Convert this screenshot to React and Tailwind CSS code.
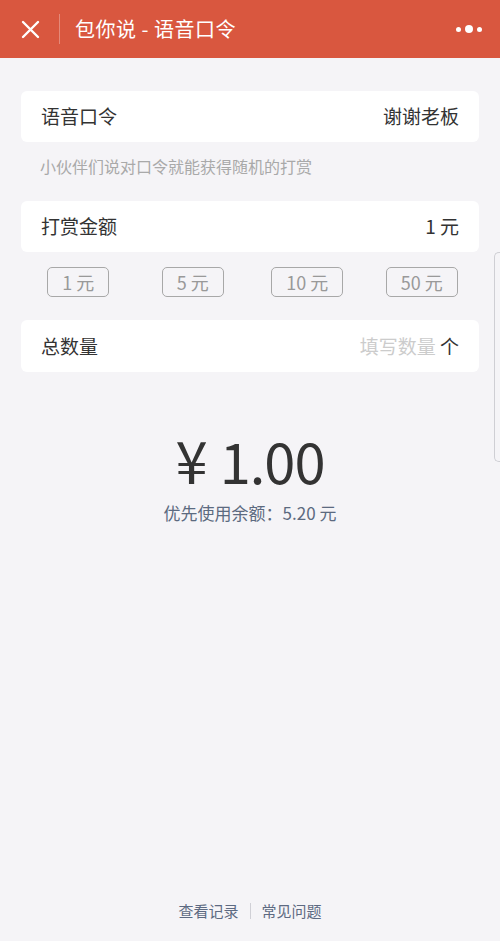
const amounts = ['1 元', '5 元', '10 元', '50 元'];
const widths = ['w-[62px]', 'w-[62px]', 'w-[72px]', 'w-[72px]'];

export default function App() {
  return (
    <div className="relative flex min-h-[941px] w-[500px] flex-col bg-[#f5f4f7] font-['Noto_Sans_CJK_SC',sans-serif]">
      <header className="flex h-[58px] items-center bg-[#d9573f] text-white">
        <div className="flex w-[59px] justify-center pl-[1px]">
          <svg width="19" height="19" viewBox="0 0 19 19" stroke="white" strokeWidth="2.4" strokeLinecap="round">
            <path d="M2 2L17 17M17 2L2 17" />
          </svg>
        </div>
        <div className="h-[30px] w-px bg-white/30" />
        <h1 className="ml-[15px] text-[20px] leading-none tracking-[0.5px]">包你说 - 语音口令</h1>
        <div className="ml-auto mr-[18px] flex items-center gap-[4px]">
          <span className="h-[5px] w-[5px] rounded-full bg-white" />
          <span className="h-[8px] w-[8px] rounded-full bg-white" />
          <span className="h-[5px] w-[5px] rounded-full bg-white" />
        </div>
      </header>

      <main className="flex flex-col px-[21px] pt-[33px]">
        <div className="flex h-[51px] items-center justify-between rounded-[6px] bg-white px-[20px] text-[19px] text-[#333]">
          <span>语音口令</span>
          <span>谢谢老板</span>
        </div>
        <p className="mt-[14px] pl-[19px] text-[16px] leading-[20px] text-[#a9a9a9]">小伙伴们说对口令就能获得随机的打赏</p>

        <div className="mt-[25px] flex h-[51px] items-center justify-between rounded-[6px] bg-white px-[20px] text-[19px] text-[#333]">
          <span>打赏金额</span>
          <span>1 元</span>
        </div>

        <div className="mt-[15px] grid h-[30px] grid-cols-4">
          {amounts.map((label, i) => (
            <div key={label} className="flex justify-center">
              <button
                className={`${widths[i]} flex h-[30px] items-center justify-center rounded-[5px] border border-[#a8a8a8] text-[18px] text-[#999]`}
              >
                {label}
              </button>
            </div>
          ))}
        </div>

        <div className="mt-[23px] flex h-[52px] items-center justify-between rounded-[6px] bg-white px-[20px] text-[19px] text-[#333]">
          <span>总数量</span>
          <span>
            <span className="text-[#cccccc]">填写数量</span> 个
          </span>
        </div>

        <div className="mt-[58px] flex flex-col items-center">
          <div className="flex items-baseline leading-none text-[#333]">
            <span className="text-[58px]">¥</span>
            <span className="ml-[12px] text-[56px] tracking-[-1px]">1.00</span>
          </div>
          <p className="mt-[12px] text-[17px] text-[#5c6a80]">优先使用余额：5.20 元</p>
        </div>
      </main>

      <footer className="mt-auto flex items-center justify-center pb-[19px] text-[15px] text-[#5d6a82]">
        <span>查看记录</span>
        <span className="mx-[11px] h-[16px] w-px bg-[#d0d0d6]" />
        <span>常见问题</span>
      </footer>

      <div className="absolute right-0 top-[252px] h-[210px] w-[6px] rounded-l-[5px] border border-r-0 border-[#cfcfd4]" />
    </div>
  );
}
